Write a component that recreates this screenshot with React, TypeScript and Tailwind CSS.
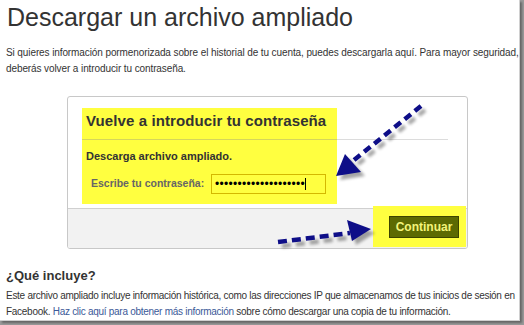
export default function App() {
  return (
    <div className="w-[524px] h-[325px] bg-[#9a9a9a] overflow-hidden font-['Liberation_Sans',Arial,sans-serif] text-[#333] relative">
      <div className="w-[520px] h-[321px] bg-white border-r border-b border-[#d0d0d0] overflow-hidden shadow-[2px_2px_2px_#666]">
        <h1 className="pl-[7px] pt-[2px] text-[25px] leading-[31px] font-normal text-[#333]">
          Descargar un archivo ampliado
        </h1>
        <p className="mt-[12px] px-[6px] text-[10px] tracking-[-0.1px] leading-[16px] whitespace-nowrap">
          Si quieres información pormenorizada sobre el historial de tu cuenta, puedes descargarla aquí. Para mayor seguridad,
          <br />
          deberás volver a introducir tu contraseña.
        </p>

        <div className="ml-[67px] mt-[19px] w-[401px] h-[153px] border border-[#c8c8c8] rounded-[3px] flex flex-col overflow-hidden">
          <div className="flex-1 pt-[11px] pl-[14px]">
            <div className="w-[255px] h-[96px] bg-[#ffff40] flex flex-col">
              <div className="pl-[4px] pt-[1px] h-[31px] text-[15px] tracking-[0.1px] leading-[24px] font-bold text-[#333]">
                Vuelve a introducir tu contraseña
              </div>
              <div className="w-[366px] h-px bg-[linear-gradient(to_right,#d6d65a_255px,#dcdcdc_255px)]" />
              <div className="pl-[4px] mt-[9px] text-[11px] leading-[14px] font-bold text-[#333]">
                Descarga archivo ampliado.
              </div>
              <div className="flex items-center mt-[11px] pl-[9px]">
                <span className="text-[10.5px] font-bold text-[#666] w-[120px]">Escribe tu contraseña:</span>
                <div className="w-[115px] h-[20px] border border-[#d4b800] bg-[#ffff40] flex items-center pl-[3px]">
                  <span className="text-[12px] leading-[12px] tracking-[0.3px] text-black">••••••••••••••••••••</span>
                  <span className="w-px h-[12px] bg-black" />
                </div>
              </div>
            </div>
          </div>
          <div className="h-[40px] bg-[#f2f2f2] border-t border-[#d0d0d0] flex justify-end pr-[1px]">
            <div className="w-[93px] h-[41px] -mt-[3px] bg-[#ffff40] flex items-start pt-[10px] pl-[16px]">
              <button className="w-[70px] h-[22px] bg-[#5c6a02] border border-[#3c4400] text-[#f4f47a] text-[12px] font-bold leading-[20px]">
                Continuar
              </button>
            </div>
          </div>
        </div>

        <h2 className="mt-[19px] px-[6px] text-[13px] leading-[16px] font-bold text-[#333]">¿Qué incluye?</h2>
        <p className="mt-[4px] pl-[6px] text-[10px] tracking-[-0.28px] leading-[16px] whitespace-nowrap">
          Este archivo ampliado incluye información histórica, como las direcciones IP que almacenamos de tus inicios de sesión en
          <br />
          Facebook. <span className="text-[#3b5998]">Haz clic aquí para obtener más información</span> sobre cómo descargar una copia de tu información.
        </p>
      </div>

      <svg className="absolute inset-0 pointer-events-none" width="524" height="325" viewBox="0 0 524 325">
        <defs>
          <filter id="sh" x="-20%" y="-20%" width="140%" height="140%">
            <feGaussianBlur stdDeviation="1.5" />
          </filter>
        </defs>
        <g transform="translate(4 4)" opacity="0.35" filter="url(#sh)">
          <line x1="421" y1="106" x2="354" y2="160" stroke="#000" strokeWidth="4.5" strokeDasharray="8 5" />
          <polygon points="336,176 345,154 361,172" fill="#000" />
          <line x1="278" y1="242" x2="350" y2="233" stroke="#000" strokeWidth="4.5" strokeDasharray="9 5" />
          <polygon points="371,229 347,220 352,241" fill="#000" />
        </g>
        <line x1="421" y1="106" x2="354" y2="160" stroke="#0e0e88" strokeWidth="4.5" strokeDasharray="8 5" />
        <polygon points="336,176 345,154 361,172" fill="#0e0e88" />
        <line x1="278" y1="242" x2="350" y2="233" stroke="#0e0e88" strokeWidth="4.5" strokeDasharray="9 5" />
        <polygon points="371,229 347,220 352,241" fill="#0e0e88" />
      </svg>
    </div>
  );
}
